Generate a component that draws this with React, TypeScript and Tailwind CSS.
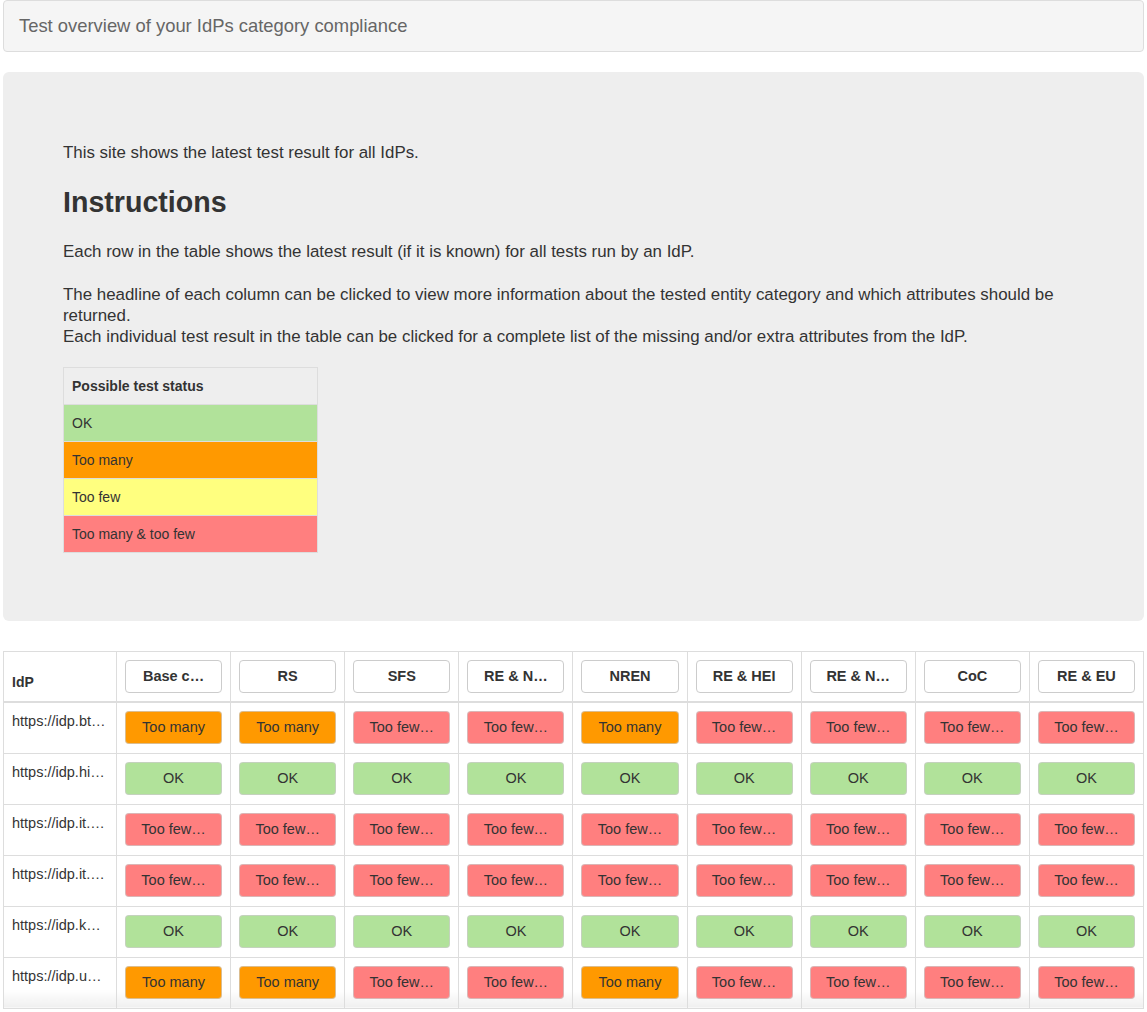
import React from "react";

type Status = "ok" | "many" | "few";

const columns = ["Base c…", "RS", "SFS", "RE & N…", "NREN", "RE & HEI", "RE & N…", "CoC", "RE & EU"];

const M: Status = "many";
const F: Status = "few";
const O: Status = "ok";

const rows: { idp: string; results: Status[] }[] = [
  { idp: "https://idp.bt…", results: [M, M, F, F, M, F, F, F, F] },
  { idp: "https://idp.hi…", results: [O, O, O, O, O, O, O, O, O] },
  { idp: "https://idp.it.…", results: [F, F, F, F, F, F, F, F, F] },
  { idp: "https://idp.it.…", results: [F, F, F, F, F, F, F, F, F] },
  { idp: "https://idp.k…", results: [O, O, O, O, O, O, O, O, O] },
  { idp: "https://idp.u…", results: [M, M, F, F, M, F, F, F, F] },
];

function ResultButton({ status }: { status: Status }) {
  const cls =
    status === "ok"
      ? "bg-[#b1e29a]"
      : status === "many"
      ? "bg-[#ff9900]"
      : "bg-[#ff7f7f]";
  const label = status === "ok" ? "OK" : status === "many" ? "Too many" : "Too few…";
  return (
    <button
      className={`w-full h-[33px] px-3 rounded-[4px] border border-[#cccccc]/70 text-[14.5px] text-[#333] whitespace-nowrap overflow-hidden ${cls}`}
    >
      {label}
    </button>
  );
}

export default function App() {
  return (
    <div className="min-h-screen bg-white text-[#333] px-[3px] pb-[4px] font-['Liberation_Sans',Arial,sans-serif]">
      {/* top panel */}
      <div className="h-[52px] bg-[#f5f5f5] border border-[#dddddd] rounded-[4px] flex items-center px-[15px] text-[18.4px] text-[#666]">
        Test overview of your IdPs category compliance
      </div>

      {/* jumbotron */}
      <div className="mt-[20px] bg-[#eeeeee] rounded-[6px] px-[60px] pt-[70px] pb-[68px]">
        <p className="text-[16.9px] leading-[21px]">This site shows the latest test result for all IdPs.</p>
        <h2 className="mt-[22px] text-[28.6px] font-bold leading-[34px]">Instructions</h2>
        <p className="mt-[22px] text-[16.9px] leading-[21px]">
          Each row in the table shows the latest result (if it is known) for all tests run by an IdP.
        </p>
        <p className="mt-[22px] text-[16.9px] leading-[21px]">
          The headline of each column can be clicked to view more information about the tested entity category and which attributes should be returned.
          <br />
          Each individual test result in the table can be clicked for a complete list of the missing and/or extra attributes from the IdP.
        </p>

        <table className="mt-[20px] w-[255px] border-collapse text-[14px]">
          <thead>
            <tr>
              <th className="h-[37px] border border-[#dddddd] px-2 text-left font-bold">Possible test status</th>
            </tr>
          </thead>
          <tbody>
            <tr>
              <td className="h-[37px] border border-[#dddddd] px-2 bg-[#b1e29a]">OK</td>
            </tr>
            <tr>
              <td className="h-[37px] border border-[#dddddd] px-2 bg-[#ff9900]">Too many</td>
            </tr>
            <tr>
              <td className="h-[37px] border border-[#dddddd] px-2 bg-[#ffff7f]">Too few</td>
            </tr>
            <tr>
              <td className="h-[37px] border border-[#dddddd] px-2 bg-[#ff7f7f]">Too many &amp; too few</td>
            </tr>
          </tbody>
        </table>
      </div>

      {/* results table */}
      <table className="mt-[30px] w-full table-fixed border-collapse text-[14.5px]">
        <thead>
          <tr>
            <th className="border border-[#dddddd] border-b-2 px-2 pb-[8px] align-bottom text-left font-bold text-[14px] w-[113px]">IdP</th>
            {columns.map((c, i) => (
              <th key={i} className="border border-[#dddddd] border-b-2 p-2">
                <button className="w-full h-[33px] px-3 rounded-[4px] border border-[#cccccc] bg-white font-bold whitespace-nowrap overflow-hidden text-[#333]">
                  {c}
                </button>
              </th>
            ))}
          </tr>
        </thead>
        <tbody>
          {rows.map((r, ri) => {
            const shade = ri === 5 ? "bg-linear-to-b from-white from-65% to-[#efefef]" : "";
            return (
              <tr key={ri}>
                <td className={`border border-[#dddddd] px-2 pt-[8px] pb-2 align-top h-[51px] whitespace-nowrap overflow-hidden ${shade}`}>
                  {r.idp}
                </td>
                {r.results.map((s, ci) => (
                  <td key={ci} className={`border border-[#dddddd] p-2 ${shade}`}>
                    <ResultButton status={s} />
                  </td>
                ))}
              </tr>
            );
          })}
        </tbody>
      </table>
    </div>
  );
}
